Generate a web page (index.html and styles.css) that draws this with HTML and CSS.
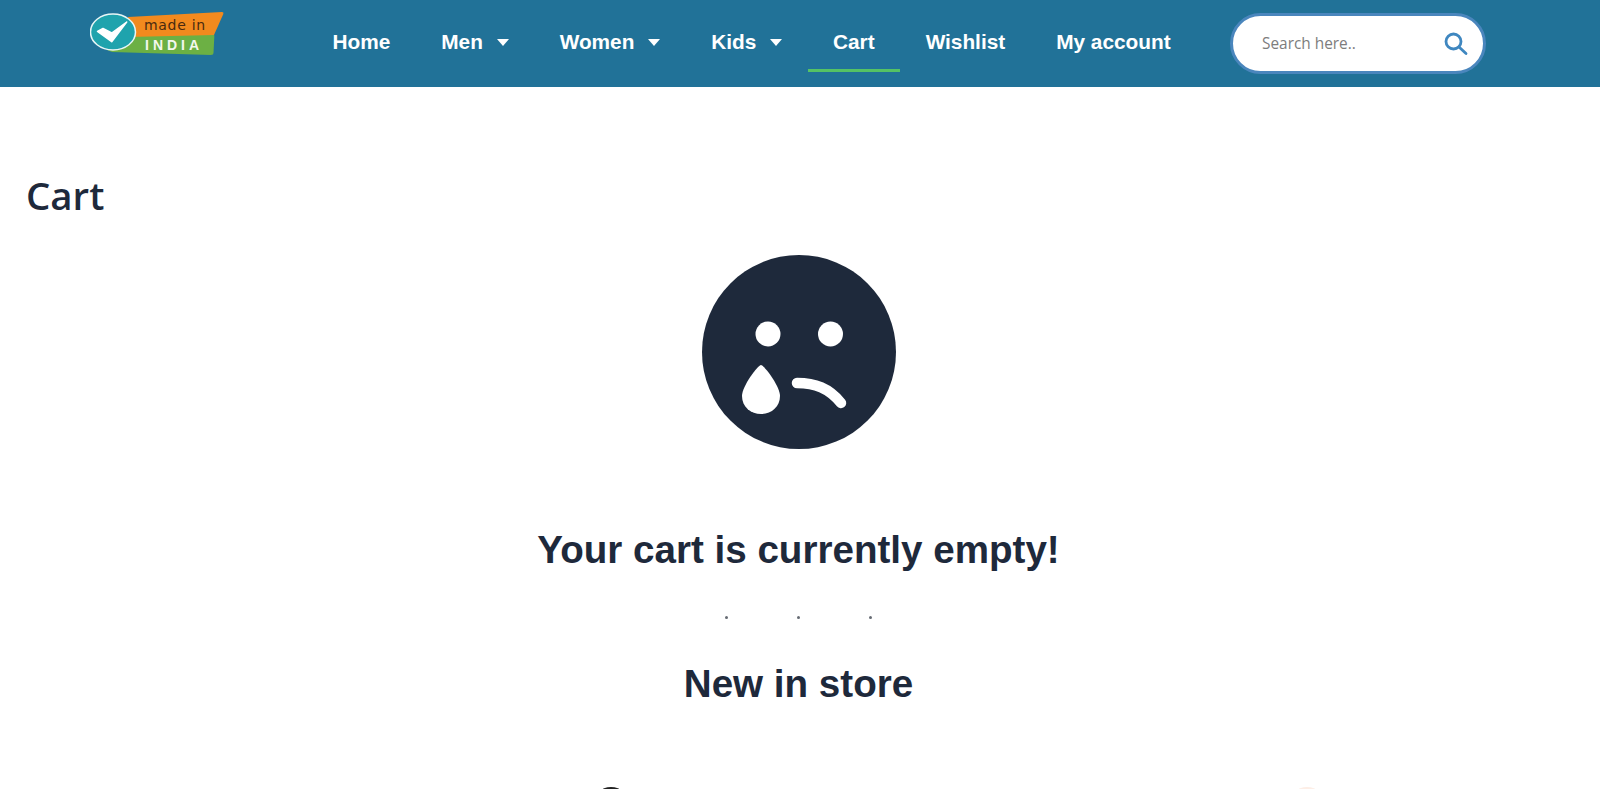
FILE: index.html
```html
<!DOCTYPE html>
<html lang="en">
<head>
  <meta charset="UTF-8" />
  <meta name="viewport" content="width=device-width, initial-scale=1.0"/>
  <title>Cart</title>
  <link rel="stylesheet" href="styles.css">
</head>
<body>
  <header class="topo">
    <a class="logo" href="#" aria-label="made in INDIA">
      <svg width="136" height="48" viewBox="0 0 136 48">
        <path d="M17 40 L45 25 L124 25 Q124.500 25 124.300 27 L123.500 43 Q123.500 45 121 45 L22 42Z" fill="#6cb044"/>
        <path d="M38 7 L132 2 Q134 2 133.300 4 L124 25 L38 27Z" fill="#f28a1e"/>
        <ellipse cx="23" cy="22" rx="22.500" ry="18" fill="#1fa3ad" stroke="#e8f6f6" stroke-width="1.500"/>
        <path d="M7.500 21.500 L13 18.500 L21.700 23 L36.700 12 L21.700 31.700Z" fill="#fff" stroke="#fff" stroke-width="1.500" stroke-linejoin="round"/>
        <text class="logo-made" x="54" y="20">made in</text>
        <text class="logo-india" x="55" y="40">INDIA</text>
      </svg>
    </a>
    <nav class="menu">
      <a href="#">Home</a>
      <a href="#" class="tem-sub">Men <i class="seta"></i></a>
      <a href="#" class="tem-sub">Women <i class="seta"></i></a>
      <a href="#" class="tem-sub">Kids <i class="seta"></i></a>
      <a href="#" class="ativo">Cart</a>
      <a href="#">Wishlist</a>
      <a href="#">My account</a>
    </nav>
    <div class="busca">
      <input type="text" placeholder="Search here.." />
      <svg width="24" height="24" viewBox="0 0 24 24" fill="none" stroke="#3f87c0" stroke-width="2.800" stroke-linecap="round">
        <circle cx="9.500" cy="9.500" r="7.500"/>
        <path d="M15 15 L22 21.500"/>
      </svg>
    </div>
  </header>

  <main>
    <h1 class="titulo">Cart</h1>
    <div class="vazio">
      <svg class="carinha" width="194" height="194" viewBox="0 0 194 194">
        <circle cx="97" cy="97" r="97" fill="#1e293b"/>
        <circle cx="66" cy="79" r="12.500" fill="#fff"/>
        <circle cx="128.500" cy="79" r="12.500" fill="#fff"/>
        <path d="M59 110 C62 110 78 131 78 141 C78 152 69 159 59 159 C49 159 40 152 40 141 C40 131 56 110 59 110Z" fill="#fff"/>
        <path d="M95 128 C113 128 127 133 139 148" fill="none" stroke="#fff" stroke-width="10.500" stroke-linecap="round"/>
      </svg>
      <h2 class="aviso">Your cart is currently empty!</h2>
      <div class="pontos"><span></span><span></span><span></span></div>
      <h2 class="novos">New in store</h2>
    </div>
    <div class="produtos">
      <span class="ponta-escura"></span>
      <span class="ponta-clara"></span>
    </div>
  </main>
</body>
</html>
```

FILE: styles.css
```css
body {
  font-family: "Liberation Sans", Arial, sans-serif;
  background: #fff;
  margin: 0;
  height: 789px;
  overflow: hidden;
}
.topo {
  display: flex;
  align-items: flex-start;
  height: 87px;
  background: #217298;
}
.logo {
  display: block;
  margin: 10px 0 0 90px;
  width: 136px;
}
.logo-made {
  font-family: "DejaVu Sans", sans-serif;
  font-size: 14px;
  letter-spacing: 0.700px;
  fill: #4a2a10;
}
.logo-india {
  font-family: "Liberation Sans", Arial, sans-serif;
  font-size: 14px;
  font-weight: bold;
  letter-spacing: 4px;
  fill: #f4f8ee;
}
.menu {
  display: flex;
  margin: 15px 0 0 81px;
}
.menu a {
  display: block;
  height: 54px;
  line-height: 54px;
  padding: 0 25.500px;
  color: #fff;
  font-size: 20.800px;
  font-weight: bold;
  text-decoration: none;
}
.menu .ativo {
  border-bottom: 3px solid #55c364;
}
.seta {
  display: inline-block;
  width: 0;
  height: 0;
  margin-left: 8px;
  vertical-align: 3px;
  border-left: 6.500px solid transparent;
  border-right: 6.500px solid transparent;
  border-top: 7.500px solid #fff;
}
.busca {
  display: flex;
  align-items: center;
  box-sizing: border-box;
  width: 256px;
  height: 61px;
  margin: 13px 114px 0 auto;
  padding: 0 15px 0 29px;
  background: #fff;
  border: 3px solid #4a86bd;
  border-radius: 31px;
}
.busca input {
  flex: 1;
  min-width: 0;
  border: none;
  outline: none;
  padding: 0;
  font-family: "Open Sans", sans-serif;
  font-size: 15.400px;
  color: #777;
}
.busca input::placeholder {
  color: #7d7d7d;
  opacity: 1;
}
.titulo {
  margin: 82px 0 0 26px;
  font-family: "Open Sans", sans-serif;
  font-size: 38.400px;
  line-height: 52px;
  font-weight: 600;
  color: #1e293b;
}
.vazio {
  display: flex;
  flex-direction: column;
  align-items: center;
  padding-right: 3px;
}
.carinha {
  display: block;
  margin-top: 34px;
}
.aviso {
  margin: 79px 0 0;
  font-size: 38.600px;
  line-height: 44px;
  color: #1e293b;
}
.pontos {
  display: flex;
  gap: 69px;
  margin-top: 44px;
}
.pontos span {
  width: 3px;
  height: 3px;
  border-radius: 50%;
  background: #666b73;
}
.novos {
  margin: 43px 0 0;
  font-size: 38.600px;
  line-height: 44px;
  color: #1e293b;
}
.produtos {
  display: flex;
  justify-content: space-between;
  width: 732px;
  margin: 81px 0 0 593px;
}
.ponta-escura {
  width: 36px;
  height: 36px;
  border-radius: 50%;
  background: #222;
}
.ponta-clara {
  width: 36px;
  height: 36px;
  border-radius: 50%;
  background: #fdeee6;
}
```
